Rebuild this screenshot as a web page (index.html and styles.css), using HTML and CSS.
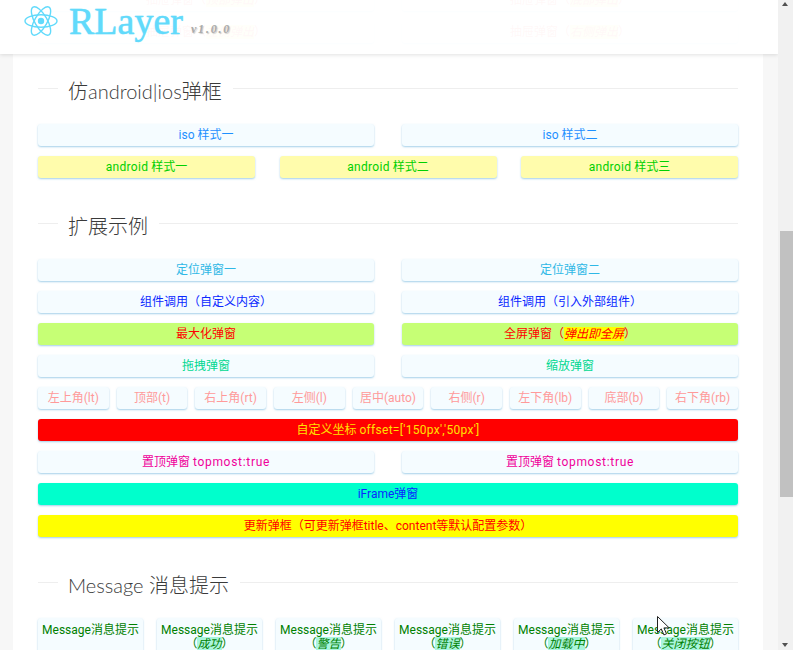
FILE: index.html
```html
<!DOCTYPE html>
<html lang="zh-CN">
<head>
<meta charset="utf-8">
<title>RLayer</title>
<link rel="stylesheet" href="styles.css">
</head>
<body>
<div class="app">
  <div class="page">
    <header class="header">
      <svg class="logo" viewBox="0 0 36 32" width="36" height="32" aria-hidden="true">
        <g fill="none" stroke="#61dafb" stroke-width="1.4">
          <ellipse cx="18" cy="16" rx="16" ry="6.2"/>
          <ellipse cx="18" cy="16" rx="16" ry="6.2" transform="rotate(60 18 16)"/>
          <ellipse cx="18" cy="16" rx="16" ry="6.2" transform="rotate(120 18 16)"/>
        </g>
        <circle cx="18" cy="16" r="3.2" fill="#61dafb"/>
      </svg>
      <span class="brand">RLayer</span>
      <span class="version">v1.0.0</span>
    </header>

    <main class="main">
      <div class="row two">
        <button class="btn ghost">抽屉弹窗（<i>顶部弹出</i>）</button>
        <button class="btn ghost">抽屉弹窗（<i>底部弹出</i>）</button>
      </div>
      <div class="row two">
        <button class="btn ghost">抽屉弹窗（<i>左侧弹出</i>）</button>
        <button class="btn ghost">抽屉弹窗（<i>右侧弹出</i>）</button>
      </div>

      <div class="title"><span>仿android|ios弹框</span></div>
      <div class="row two">
        <button class="btn iso">iso 样式一</button>
        <button class="btn iso">iso 样式二</button>
      </div>
      <div class="row three">
        <button class="btn android"><span class="wide">android</span> 样式一</button>
        <button class="btn android"><span class="wide">android</span> 样式二</button>
        <button class="btn android"><span class="wide">android</span> 样式三</button>
      </div>

      <div class="title"><span>扩展示例</span></div>
      <div class="row two">
        <button class="btn locate">定位弹窗一</button>
        <button class="btn locate">定位弹窗二</button>
      </div>
      <div class="row two">
        <button class="btn comp">组件调用（自定义内容）</button>
        <button class="btn comp">组件调用（引入外部组件）</button>
      </div>
      <div class="row two">
        <button class="btn maxi">最大化弹窗</button>
        <button class="btn maxi">全屏弹窗（<i>弹出即全屏</i>）</button>
      </div>
      <div class="row two">
        <button class="btn drag">拖拽弹窗</button>
        <button class="btn drag">缩放弹窗</button>
      </div>
      <div class="row nine">
        <button class="btn pos">左上角(lt)</button>
        <button class="btn pos">顶部(t)</button>
        <button class="btn pos">右上角(rt)</button>
        <button class="btn pos">左侧(l)</button>
        <button class="btn pos">居中(auto)</button>
        <button class="btn pos">右侧(r)</button>
        <button class="btn pos">左下角(lb)</button>
        <button class="btn pos">底部(b)</button>
        <button class="btn pos">右下角(rb)</button>
      </div>
      <div class="row">
        <button class="btn offset">自定义坐标 <span class="wide">offset=['150px','50px']</span></button>
      </div>
      <div class="row two">
        <button class="btn top">置顶弹窗 <span class="wider">topmost:true</span></button>
        <button class="btn top">置顶弹窗 <span class="wider">topmost:true</span></button>
      </div>
      <div class="row">
        <button class="btn iframe">iFrame弹窗</button>
      </div>
      <div class="row">
        <button class="btn update">更新弹框（可更新弹框title、content等默认配置参数）</button>
      </div>

      <div class="title"><span>Message 消息提示</span></div>
      <div class="row six">
        <button class="btn msg"><span>Message消息提示</span></button>
        <button class="btn msg"><span>Message消息提示<br>（<i>成功</i>）</span></button>
        <button class="btn msg"><span>Message消息提示<br>（<i>警告</i>）</span></button>
        <button class="btn msg"><span>Message消息提示<br>（<i>错误</i>）</span></button>
        <button class="btn msg"><span>Message消息提示<br>（<i>加载中</i>）</span></button>
        <button class="btn msg"><span>Message消息提示<br>（<i>关闭按钮</i>）</span></button>
      </div>
    </main>

    <svg class="cursor" viewBox="0 0 13 20" width="13" height="20" aria-hidden="true">
      <path d="M.5.5v16l3.8-3.6 2.6 6 2.6-1.1-2.6-5.9h5.3z" fill="#fff" stroke="#222" stroke-width="1"/>
    </svg>
  </div>

  <div class="scrollbar">
    <span class="arrow up"></span>
    <div class="thumb"></div>
    <span class="arrow down"></span>
  </div>
</div>
</body>
</html>
```
FILE: styles.css
```css
* { box-sizing: border-box; }

html, body {
  margin: 0;
  height: 100%;
  overflow: hidden;
}

body {
  font-family: Roboto, "Noto Sans CJK SC", sans-serif;
  font-size: 12px;
  background: #f7f7f7;
}

.app {
  display: flex;
  height: 650px;
}

.page {
  position: relative;
  flex: 1;
  overflow: hidden;
  padding: 0 15px 0 13px;
}

.header {
  position: absolute;
  z-index: 2;
  top: 0;
  left: 0;
  right: 0;
  height: 54px;
  display: flex;
  align-items: flex-start;
  padding: 5px 0 0 23px;
  background: rgba(255, 255, 255, .95);
  box-shadow: 0 1px 4px rgba(0, 0, 0, .12);
}

.logo { flex: none; }

.brand {
  margin-left: 10px;
  margin-top: -6px;
  font-family: "Liberation Serif", serif;
  font-size: 38px;
  line-height: 44px;
  color: #61dafb;
  -webkit-text-stroke: .4px #61dafb;
  text-shadow: 0 0 1px rgba(97, 218, 251, .6);
}

.version {
  margin-left: 8px;
  margin-top: 17px;
  font-family: "Liberation Serif", serif;
  font-size: 12px;
  line-height: 14px;
  font-weight: bold;
  font-style: italic;
  letter-spacing: 1.8px;
  color: #aaa;
  text-shadow: 1px 1px 1px rgba(0, 0, 0, .2);
}

.main {
  min-height: 100%;
  margin-top: -11px;
  padding: 0 25px;
  background: #fff;
}

.title {
  display: flex;
  align-items: center;
  height: 31px;
  margin: 30px 0 20px;
  font-family: Lato, "Noto Sans CJK SC", sans-serif;
  font-size: 20px;
  font-weight: 300;
  color: #3a3a3a;
}

.title::before {
  content: "";
  width: 20px;
  height: 1px;
  background: #eee;
}

.title::after {
  content: "";
  flex: 1;
  height: 1px;
  background: #eee;
}

.title span {
  padding: 0 11px 0 10px;
  line-height: 31px;
  margin-top: 5px;
}

.row {
  display: grid;
  margin-bottom: 10px;
}

.row:has(+ .title) { margin-bottom: 0; }

.two { grid-template-columns: repeat(2, 1fr); column-gap: 28px; }
.three { grid-template-columns: repeat(3, 1fr); column-gap: 24.5px; }
.nine { grid-template-columns: repeat(9, 1fr); column-gap: 8px; }
.six { grid-template-columns: repeat(6, 1fr); column-gap: 14px; }

.btn {
  display: block;
  width: 100%;
  height: 22px;
  padding: 1px 0 0;
  border: 0;
  border-radius: 3px;
  font: inherit;
  line-height: 21px;
  text-align: center;
  background: #f5fcff;
  box-shadow: 0 1px 2px rgba(90, 170, 215, .55);
}

.btn i { font-style: italic; }

.wide { letter-spacing: .3px; }
.wider { letter-spacing: .7px; }

.ghost { color: #f56c6c; }
.ghost i { background: #ffff99; }

.iso { color: #1e90ff; }
.android { color: #00d000; background: #fffcac; }
.locate { color: #2eb8e6; }
.comp { color: #0a28ff; }
.maxi { color: #f00; background: #c6ff75; }
.maxi i { background: #ff0; }
.drag { color: #00d890; }
.pos { color: #ff9a9a; }
.offset { color: #ffe000; background: #f00; }
.top { color: #f0009a; }
.iframe { color: #0a28ff; background: #00ffcc; }
.update { color: #f00; background: #ff0; }

.msg {
  display: flex;
  align-items: flex-start;
  justify-content: center;
  height: 60px;
  padding: 5px 4px;
  line-height: 14px;
  color: #008000;
}

.msg i { background: #aaf5dd; }

.cursor {
  position: absolute;
  z-index: 3;
  left: 657px;
  top: 616px;
}

.scrollbar {
  position: relative;
  flex: none;
  width: 15px;
  background: #f1f1f1;
}

.thumb {
  height: 266px;
  margin: 231px 0 0 2px;
  background: #c1c1c1;
}

.arrow {
  position: absolute;
  left: 4px;
  width: 0;
  height: 0;
  border-left: 3.5px solid transparent;
  border-right: 3.5px solid transparent;
}

.up { top: 2px; border-bottom: 4px solid #505050; }
.down { bottom: 3px; border-top: 4px solid #505050; }
```
